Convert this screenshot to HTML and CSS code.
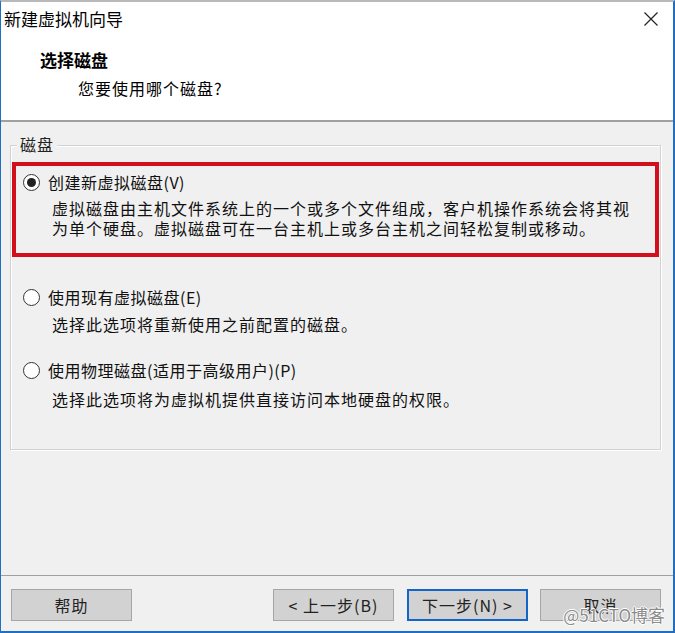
FILE: index.html
```html
<!DOCTYPE html>
<html lang="zh-CN">
<head>
<meta charset="utf-8">
<title>新建虚拟机向导</title>
<link rel="stylesheet" href="styles.css">
</head>
<body>
<div class="window">
  <div class="header">
    <div class="titlebar">
      <span class="title">新建虚拟机向导</span>
      <svg class="close" width="14" height="14" viewBox="0 0 14 14"><path d="M0.5 0.5 L13.5 13.5 M13.5 0.5 L0.5 13.5" stroke="#222" stroke-width="1.2" fill="none"/></svg>
    </div>
    <div class="heading">选择磁盘</div>
    <div class="subheading">您要使用哪个磁盘?</div>
  </div>
  <div class="content">
    <div class="group">
      <div class="legend">磁盘</div>
      <div class="option option-selected">
        <div class="label"><span class="radio checked"></span>创建新虚拟磁盘(V)</div>
        <div class="desc"><div>虚拟磁盘由主机文件系统上的一个或多个文件组成，客户机操作系统会将其视</div><div>为单个硬盘。虚拟磁盘可在一台主机上或多台主机之间轻松复制或移动。</div></div>
      </div>
      <div class="option option-2">
        <div class="label"><span class="radio"></span>使用现有虚拟磁盘(E)</div>
        <div class="desc">选择此选项将重新使用之前配置的磁盘。</div>
      </div>
      <div class="option option-3">
        <div class="label"><span class="radio"></span>使用物理磁盘(适用于高级用户)(P)</div>
        <div class="desc">选择此选项将为虚拟机提供直接访问本地硬盘的权限。</div>
      </div>
    </div>
  </div>
  <div class="footer">
    <button class="btn">帮助</button>
    <div class="nav">
      <button class="btn">&lt; 上一步(B)</button>
      <button class="btn btn-default">下一步(N) &gt;</button>
    </div>
    <button class="btn">取消</button>
    <span class="watermark">@51CTO博客</span>
  </div>
</div>
</body>
</html>
```

FILE: styles.css
```css
html, body {
  margin: 0;
  padding: 0;
  background: #ffffff;
}
body {
  font-family: "Noto Sans CJK SC", "Microsoft YaHei", sans-serif;
  color: #111;
}
.window {
  position: relative;
  width: 675px;
  height: 633px;
  box-sizing: border-box;
  border-top: 2px solid #b9b9b9;
  border-left: 1px solid #1f6fc5;
  border-right: 2px solid #1f6fc5;
  border-bottom: 2px solid #1f6fc5;
  background: #f0f0f0;
  display: flex;
  flex-direction: column;
}
.header {
  background: #ffffff;
  height: 118px;
  border-bottom: 2px solid #a0a0a0;
  flex: none;
}
.titlebar {
  display: flex;
  align-items: center;
  justify-content: space-between;
  height: 36px;
  padding: 0 15px 0 3px;
}
.title {
  font-size: 17px;
  line-height: 20px;
  margin-top: -2px;
  color: #000;
}
.close {
  display: block;
  margin-top: -2px;
}
.heading {
  font-size: 17px;
  font-weight: bold;
  line-height: 20px;
  margin-top: 12px;
  padding-left: 39px;
  color: #000;
}
.subheading {
  font-size: 16px;
  letter-spacing: 1px;
  line-height: 20px;
  margin-top: 8px;
  padding-left: 77px;
  color: #000;
}
.content {
  flex: none;
  height: 330px;
  padding: 23px 12px 0 9px;
  box-sizing: border-box;
}
.group {
  position: relative;
  height: 305px;
  border: 1px solid #d2d2d2;
  box-shadow: inset 1px 1px 0 #ffffff, 1px 1px 0 #ffffff;
  padding: 16px 1px 0 1px;
  box-sizing: border-box;
}
.legend {
  position: absolute;
  top: -12px;
  left: 6px;
  padding: 0 3px;
  background: #f0f0f0;
  font-size: 16px;
  letter-spacing: 1px;
  line-height: 20px;
  color: #222;
}
.option {
  font-size: 16px;
  line-height: 20px;
  color: #111;
}
.option-selected {
  border: 4px solid #d20f1c;
  padding: 6px 0 13px 7px;
  height: 95px;
  box-sizing: border-box;
}
.option-2 {
  margin-top: 30px;
  padding-left: 11px;
}
.option-3 {
  margin-top: 26px;
  padding-left: 11px;
}
.label {
  display: flex;
  align-items: center;
  height: 20px;
  letter-spacing: 0.5px;
}
.radio {
  width: 15px;
  height: 15px;
  border: 1px solid #333;
  border-radius: 50%;
  background: #ffffff;
  margin-right: 8px;
  position: relative;
  flex: none;
}
.radio.checked::after {
  content: "";
  position: absolute;
  left: 3px;
  top: 3px;
  width: 9px;
  height: 9px;
  border-radius: 50%;
  background: #222;
}
.desc {
  padding-left: 29px;
  margin-top: 6px;
  letter-spacing: 1px;
}
.desc div {
  height: 20px;
  overflow: visible;
}
.option-2 .desc { margin-top: 7px; }
.option-3 .desc { margin-top: 9px; }
.footer {
  flex: 1;
  border-top: 1px solid #a0a0a0;
  display: flex;
  align-items: flex-start;
  justify-content: space-between;
  padding: 13px 12px 0 10px;
  margin-top: 123px;
}
.nav {
  display: flex;
  gap: 13px;
  margin-left: auto;
  margin-right: 12px;
}
.btn {
  width: 121px;
  height: 32px;
  box-sizing: border-box;
  border: 1px solid #a6a6a6;
  background: #d2d2d2;
  font-family: "Noto Sans CJK SC", sans-serif;
  font-size: 16px;
  letter-spacing: 1px;
  color: #222;
  padding: 0;
}
.btn-default {
  border: 2px solid #1565c9;
}
.watermark {
  position: absolute;
  right: 8px;
  bottom: 4px;
  font-family: "Noto Sans CJK SC", sans-serif;
  font-size: 17px;
  color: #8a8a8a;
  text-shadow: 1px 0 0 #fff, -1px 0 0 #fff, 0 1px 0 #fff, 0 -1px 0 #fff;
}
```
